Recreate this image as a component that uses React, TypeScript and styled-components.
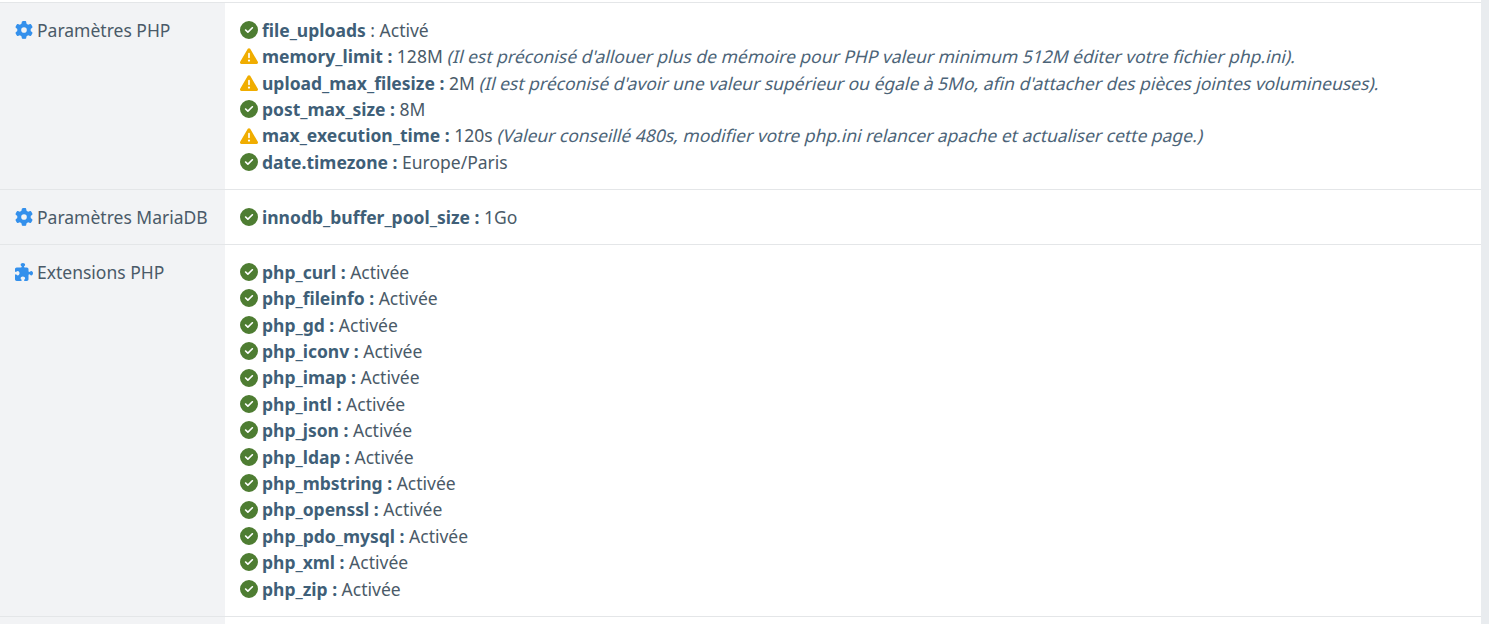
import React from 'react';
import styled, { createGlobalStyle } from 'styled-components';
import { FaCircleCheck, FaGear, FaPuzzlePiece, FaTriangleExclamation } from 'react-icons/fa6';

const GlobalStyle = createGlobalStyle`
  html, body {
    margin: 0;
    height: 624px;
    overflow: hidden;
    background: #e9ecef;
  }
`;

const Page = styled.div`
  width: 1481px;
  height: 624px;
  overflow: hidden;
  padding-top: 2px;
  box-sizing: border-box;
  background: #fff;
  font-family: "Noto Sans", "Open Sans", sans-serif;
  font-size: 17.5px;
  line-height: 26.4px;
  color: #4a5a68;
`;

const Row = styled.div`
  display: grid;
  grid-template-columns: 225px 1fr;
  border-top: 1px solid #e4e6e8;
`;

const Label = styled.div`
  display: flex;
  align-items: flex-start;
  gap: 4.4px;
  padding: 13.7px 14.6px 13.9px;
  background: #f2f3f5;
  white-space: nowrap;
`;

const LabelIcon = styled.span`
  display: flex;
  align-items: center;
  height: 26.4px;
  color: #3490ec;
  font-size: 18px;
`;

const Values = styled.div`
  padding: 13.7px 14.6px 13.9px;
`;

const Line = styled.div`
  display: flex;
  align-items: center;
  gap: 4.4px;
  white-space: pre;
`;

const StatusIcon = styled.span<{ $warn?: boolean }>`
  display: flex;
  align-items: center;
  font-size: 18px;
  color: ${p => (p.$warn ? '#f0ad00' : '#4e7d32')};
`;

const Name = styled.strong`
  font-weight: 700;
  color: #3f5f78;
`;

/* the reference slants the upright face instead of using the true italic */
const Note = styled.span`
  display: inline-block;
  color: #4c6478;
  letter-spacing: -0.012px;
  transform: skewX(-14deg);
  transform-origin: 0 72%;
`;

type Item = { name: string; sep?: string; value: string; note?: string; warn?: boolean };

const phpParams: Item[] = [
  { name: 'file_uploads', sep: ' : ', value: 'Activé' },
  { name: 'memory_limit :', value: ' 128M ', note: "(Il est préconisé d'allouer plus de mémoire pour PHP valeur minimum 512M éditer votre fichier php.ini).", warn: true },
  { name: 'upload_max_filesize :', value: ' 2M ', note: "(Il est préconisé d'avoir une valeur supérieur ou égale à 5Mo, afin d'attacher des pièces jointes volumineuses).", warn: true },
  { name: 'post_max_size :', value: ' 8M' },
  { name: 'max_execution_time :', value: ' 120s ', note: '(Valeur conseillé 480s, modifier votre php.ini relancer apache et actualiser cette page.)', warn: true },
  { name: 'date.timezone :', value: ' Europe/Paris' },
];

const extensions = ['curl', 'fileinfo', 'gd', 'iconv', 'imap', 'intl', 'json', 'ldap', 'mbstring', 'openssl', 'pdo_mysql', 'xml', 'zip'];

const ItemLine = ({ name, sep, value, note, warn }: Item) => (
  <Line>
    <StatusIcon $warn={warn}>{warn ? <FaTriangleExclamation /> : <FaCircleCheck />}</StatusIcon>
    <span>
      <Name>{name}</Name>
      {sep}
      {value}
      {note && <Note>{note}</Note>}
    </span>
  </Line>
);

export default function App() {
  return (
    <Page>
      <GlobalStyle />
      <Row>
        <Label>
          <LabelIcon><FaGear /></LabelIcon>
          Paramètres PHP
        </Label>
        <Values>
          {phpParams.map(item => <ItemLine key={item.name} {...item} />)}
        </Values>
      </Row>
      <Row>
        <Label>
          <LabelIcon><FaGear /></LabelIcon>
          Paramètres MariaDB
        </Label>
        <Values>
          <ItemLine name="innodb_buffer_pool_size :" value=" 1Go" />
        </Values>
      </Row>
      <Row>
        <Label>
          <LabelIcon><FaPuzzlePiece /></LabelIcon>
          Extensions PHP
        </Label>
        <Values>
          {extensions.map(ext => <ItemLine key={ext} name={`php_${ext} :`} value=" Activée" />)}
        </Values>
      </Row>
      <Row>
        <Label />
        <Values />
      </Row>
    </Page>
  );
}
